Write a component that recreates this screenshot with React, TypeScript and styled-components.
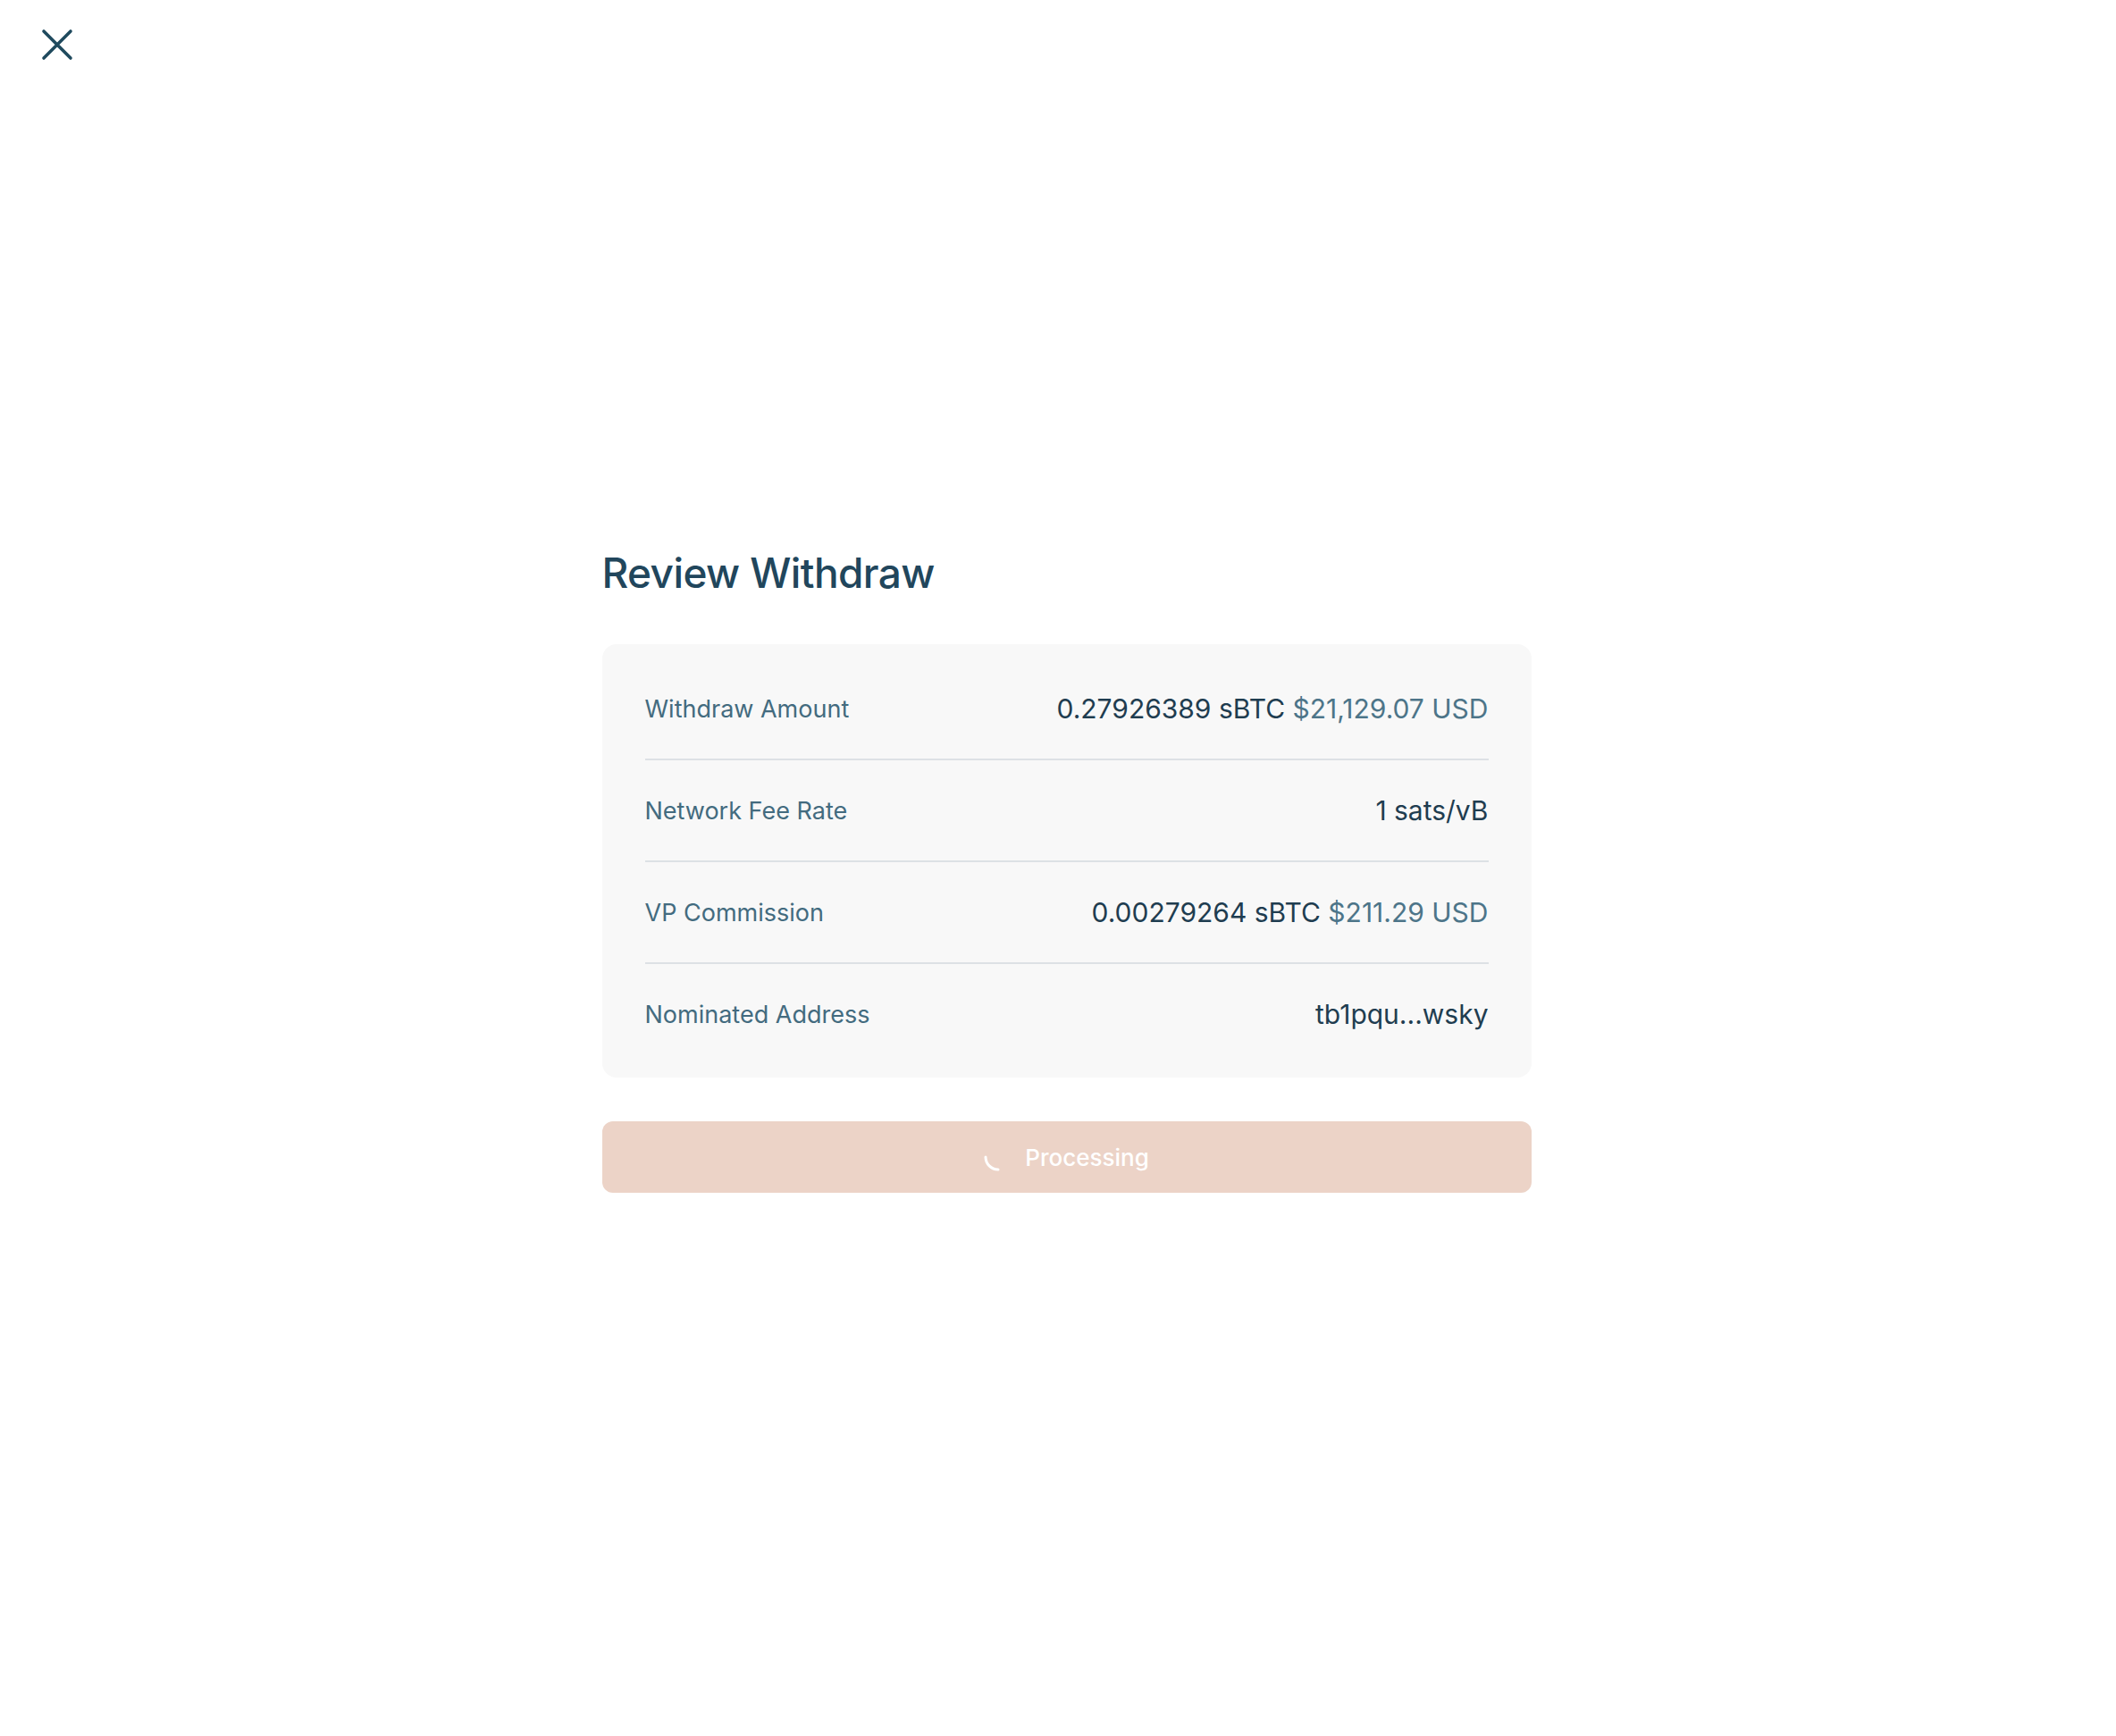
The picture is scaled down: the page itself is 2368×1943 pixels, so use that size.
import styled, { createGlobalStyle } from "styled-components";

const GlobalStyle = createGlobalStyle`
    html, body {
        margin: 0;
        padding: 0;
        background: #ffffff;
        font-family: Inter, "Noto Sans", "Liberation Sans", sans-serif;
    }
`;

const Page = styled.main`
    min-height: 100vh;
    box-sizing: border-box;
    display: flex;
    align-items: center;
    justify-content: center;
    padding: 4px 0 0 19px;
`;

const CloseButton = styled.button`
    position: absolute;
    top: 32px;
    left: 46px;
    width: 36px;
    height: 36px;
    padding: 0;
    border: none;
    background: none;
    cursor: pointer;
    color: #1f4a5e;
`;

const Panel = styled.section`
    width: 1040px;
    display: flex;
    flex-direction: column;
`;

const Title = styled.h1`
    margin: 0 0 51px;
    font-size: 46px;
    line-height: 58px;
    font-weight: 500;
    letter-spacing: -0.6px;
    color: #21465c;
`;

const Card = styled.div`
    background: #f8f8f8;
    border-radius: 16px;
    padding: 16px 48px 15px;
`;

const Row = styled.div`
    height: 112px;
    display: flex;
    align-items: center;
    justify-content: space-between;
    border-bottom: 2px solid #dde1e5;

    &:last-child {
        border-bottom: none;
    }
`;

const Label = styled.span`
    font-size: 27px;
    color: #436b7f;
`;

const Value = styled.span`
    font-size: 30px;
    color: #1f3d50;
`;

const Fiat = styled.span`
    color: #4d7589;
`;

const SubmitButton = styled.button`
    margin-top: 49px;
    height: 80px;
    border: none;
    border-radius: 12px;
    background: #ecd3c7;
    color: #ffffff;
    font-family: inherit;
    font-size: 26px;
    font-weight: 500;
    display: flex;
    align-items: center;
    justify-content: center;
    gap: 14px;
    cursor: default;
`;

function Spinner() {
    return (
        <svg width="32" height="32" viewBox="0 0 32 32" fill="none">
            <path d="M2 16 A14 14 0 0 0 16 30" stroke="#ffffff" strokeWidth="3" strokeLinecap="round" />
        </svg>
    );
}

const rows = [
    { label: "Withdraw Amount", value: "0.27926389 sBTC", fiat: "$21,129.07 USD" },
    { label: "Network Fee Rate", value: "1 sats/vB" },
    { label: "VP Commission", value: "0.00279264 sBTC", fiat: "$211.29 USD" },
    { label: "Nominated Address", value: "tb1pqu...wsky" },
];

export default function App() {
    return (
        <>
            <GlobalStyle />
            <CloseButton aria-label="Close">
                <svg width="36" height="36" viewBox="0 0 36 36" fill="none">
                    <path d="M3 3 L33 33 M33 3 L3 33" stroke="currentColor" strokeWidth="3.6" strokeLinecap="round" />
                </svg>
            </CloseButton>
            <Page>
                <Panel>
                    <Title>Review Withdraw</Title>
                    <Card>
                        {rows.map((row) => (
                            <Row key={row.label}>
                                <Label>{row.label}</Label>
                                <Value>
                                    {row.value}
                                    {row.fiat && <Fiat> {row.fiat}</Fiat>}
                                </Value>
                            </Row>
                        ))}
                    </Card>
                    <SubmitButton disabled>
                        <Spinner />
                        Processing
                    </SubmitButton>
                </Panel>
            </Page>
        </>
    );
}
